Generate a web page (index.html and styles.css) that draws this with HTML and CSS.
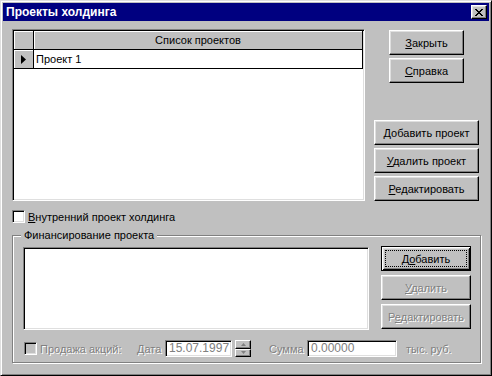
FILE: index.html
```html
<!DOCTYPE html>
<html lang="ru">
<head>
    <meta charset="UTF-8">
    <title>Проекты холдинга</title>
    <link rel="stylesheet" href="styles.css">
</head>
<body>
    <div class="window">
        <div class="titlebar">
            <span class="title">Проекты холдинга</span>
            <button class="close-btn">
                <svg width="8" height="7" viewBox="0 0 8 7" shape-rendering="crispEdges">
                    <path d="M0 0h2v1H0zM6 0h2v1H6zM1 1h2v1H1zM5 1h2v1H5zM2 2h4v1H2zM3 3h2v1H3zM2 4h4v1H2zM1 5h2v1H1zM5 5h2v1H5zM0 6h2v1H0zM6 6h2v1H6z" fill="#000"/>
                </svg>
            </button>
        </div>

        <div class="client">
            <div class="top">
                <div class="grid">
                    <div class="grid-row header">
                        <div class="ind"></div>
                        <div class="cell">Список проектов</div>
                    </div>
                    <div class="grid-row">
                        <div class="ind">
                            <svg width="5" height="9" viewBox="0 0 5 9"><path d="M0 0L5 4.5L0 9z" fill="#000"/></svg>
                        </div>
                        <div class="cell data">Проект 1</div>
                    </div>
                </div>

                <div class="side">
                    <div class="side-group">
                        <button class="btn btn-sm"><u>З</u>акрыть</button>
                        <button class="btn btn-sm"><u>С</u>правка</button>
                    </div>
                    <div class="side-group">
                        <button class="btn btn-wide"><u>Д</u>обавить проект</button>
                        <button class="btn btn-wide"><u>У</u>далить проект</button>
                        <button class="btn btn-wide"><u>Р</u>едактировать</button>
                    </div>
                </div>
            </div>

            <label class="check">
                <span class="box"></span>
                <span class="check-text"><u>В</u>нутренний проект холдинга</span>
            </label>

            <div class="group">
                <span class="group-caption">Финансирование проекта</span>
                <div class="group-body">
                    <div class="memo"></div>
                    <div class="group-buttons">
                        <button class="btn btn-mid btn-default"><span class="focus">Д<u>о</u>бавить</span></button>
                        <button class="btn btn-mid" disabled><u>У</u>далить</button>
                        <button class="btn btn-mid" disabled>Р<u>е</u>дактировать</button>
                    </div>
                </div>
                <div class="bottom-row">
                    <label class="check disabled sale">
                        <span class="box"></span>
                        <span class="check-text">Продажа акций:</span>
                    </label>
                    <span class="lbl lbl-date">Дата</span>
                    <div class="edit edit-date">15.07.1997</div>
                    <div class="spin">
                        <div class="spin-half">
                            <svg width="5" height="3" viewBox="0 0 5 3"><path d="M2.5 0L5 3H0z" fill="#808080"/></svg>
                        </div>
                        <div class="spin-half">
                            <svg width="5" height="3" viewBox="0 0 5 3"><path d="M0 0h5L2.5 3z" fill="#808080"/></svg>
                        </div>
                    </div>
                    <span class="lbl lbl-sum">Сумма</span>
                    <div class="edit edit-sum">0.00000</div>
                    <span class="lbl lbl-unit">тыс. руб.</span>
                </div>
            </div>
        </div>
    </div>
</body>
</html>
```

FILE: styles.css
```css
* {
    box-sizing: border-box;
}

body {
    margin: 0;
    font-family: "Liberation Sans", Arial, sans-serif;
    font-size: 11px;
    color: #000;
    background-color: #c0c0c0;
}

.window {
    width: 492px;
    height: 376px;
    background-color: #c0c0c0;
    border: 1px solid;
    border-color: #dfdfdf #000 #000 #dfdfdf;
    box-shadow: inset 1px 1px #fff, inset -1px -1px #808080;
    padding: 2px;
    display: flex;
    flex-direction: column;
}

.titlebar {
    height: 18px;
    background-color: #000080;
    display: flex;
    align-items: center;
    justify-content: space-between;
    padding: 0 2px 0 3px;
}

.title {
    color: #fff;
    font-weight: bold;
    font-size: 12px;
}

.close-btn {
    width: 16px;
    height: 14px;
    padding: 0;
    background-color: #c0c0c0;
    border: 1px solid;
    border-color: #fff #000 #000 #fff;
    box-shadow: inset -1px -1px #808080, inset 1px 1px #dfdfdf;
    display: flex;
    align-items: center;
    justify-content: center;
}

.client {
    flex: 1;
    padding: 8px 0 0 9px;
}

.top {
    display: flex;
    height: 172px;
}

/* sunken data grid */
.grid {
    width: 353px;
    height: 172px;
    background-color: #fff;
    border: 1px solid;
    border-color: #808080 #fff #fff #808080;
    box-shadow: inset 1px 1px #000, inset -1px -1px #dfdfdf;
    padding: 1px;
}

.grid-row {
    display: flex;
    height: 19px;
    border-bottom: 1px solid #000;
}

.ind {
    width: 20px;
    background-color: #c0c0c0;
    border-right: 1px solid #000;
    box-shadow: inset 1px 1px #fff;
    display: flex;
    align-items: center;
    justify-content: center;
}

.cell {
    flex: 1;
    line-height: 18px;
    border-right: 1px solid #000;
}

.header .cell {
    background-color: #c0c0c0;
    box-shadow: inset 1px 1px #fff;
    text-align: center;
}

.cell.data {
    padding-left: 2px;
}

.side {
    width: 105px;
    margin-left: 9px;
    display: flex;
    flex-direction: column;
    justify-content: space-between;
}

.side-group {
    display: flex;
    flex-direction: column;
    align-items: center;
    gap: 3px;
}

.side-group:first-child {
    padding-top: 1px;
}

/* win95 buttons */
.btn {
    height: 25px;
    padding: 0;
    font: inherit;
    color: #000;
    background-color: #c0c0c0;
    border: 1px solid;
    border-color: #fff #000 #000 #fff;
    box-shadow: inset -1px -1px #808080, inset 1px 1px #dfdfdf;
}

.btn-sm {
    width: 75px;
}

.btn-wide {
    width: 105px;
}

.btn-mid {
    width: 90px;
}

.btn-default {
    border: 1px solid #000;
    box-shadow: inset 1px 1px #fff, inset -1px -1px #000, inset 2px 2px #dfdfdf, inset -2px -2px #808080;
    display: flex;
    padding: 3px;
}

.btn-default .focus {
    flex: 1;
    border: 1px dotted #000;
    display: flex;
    align-items: center;
    justify-content: center;
}

.btn:disabled {
    color: #808080;
    text-shadow: 1px 1px 0 #fff;
}

.check {
    display: flex;
    align-items: center;
    margin-top: 9px;
    height: 13px;
}

.box {
    width: 13px;
    height: 13px;
    background-color: #fff;
    border: 1px solid;
    border-color: #808080 #fff #fff #808080;
    box-shadow: inset 1px 1px #000, inset -1px -1px #dfdfdf;
}

.check-text {
    margin-left: 3px;
}

.check.disabled .box {
    background-color: #c0c0c0;
}

.check.disabled .check-text,
.lbl {
    color: #808080;
    text-shadow: 1px 1px 0 #fff;
}

/* etched group box */
.group {
    position: relative;
    width: 469px;
    height: 128px;
    margin-top: 12px;
    border: 1px solid #808080;
    box-shadow: inset 1px 1px #fff, 1px 1px #fff;
    padding: 11px 0 0 10px;
}

.group-caption {
    position: absolute;
    top: -7px;
    left: 8px;
    padding: 0 3px;
    line-height: 13px;
    background-color: #c0c0c0;
}

.group-body {
    display: flex;
}

.memo {
    width: 346px;
    height: 83px;
    background-color: #fff;
    border: 1px solid;
    border-color: #808080 #fff #fff #808080;
    box-shadow: inset 1px 1px #000, inset -1px -1px #dfdfdf;
}

.group-buttons {
    margin-left: 12px;
    margin-top: -1px;
    display: flex;
    flex-direction: column;
    gap: 4px;
}

.bottom-row {
    display: flex;
    align-items: center;
    height: 17px;
    margin-top: 10px;
}

.check.sale {
    margin-top: 0;
    width: 114px;
    padding-left: 1px;
}

.lbl-date {
    width: 28px;
}

.edit {
    height: 17px;
    background-color: #fff;
    color: #808080;
    border: 1px solid;
    border-color: #808080 #fff #fff #808080;
    box-shadow: inset 1px 1px #000, inset -1px -1px #dfdfdf;
    padding: 0 3px;
    line-height: 15px;
}

.edit-date {
    width: 67px;
    font-size: 12px;
}

.edit-sum {
    width: 90px;
    font-size: 12px;
}

.spin {
    width: 16px;
    height: 17px;
    margin-left: 3px;
    display: flex;
    flex-direction: column;
}

.spin-half {
    flex: 1;
    background-color: #c0c0c0;
    border: 1px solid;
    border-color: #fff #000 #000 #fff;
    box-shadow: inset -1px -1px #808080;
    display: flex;
    align-items: center;
    justify-content: center;
}

.lbl-sum {
    margin-left: 18px;
    width: 38px;
}

.lbl-unit {
    margin-left: 9px;
}
```
